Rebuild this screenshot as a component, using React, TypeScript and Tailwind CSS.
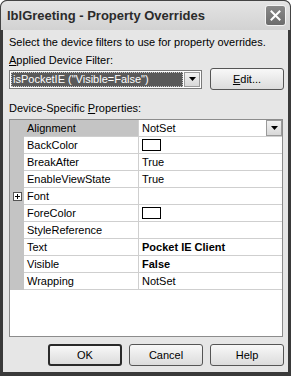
const rows: { name: string; value?: string; bold?: boolean; swatch?: boolean; expand?: boolean; selected?: boolean }[] = [
  { name: "Alignment", value: "NotSet", selected: true },
  { name: "BackColor", swatch: true },
  { name: "BreakAfter", value: "True" },
  { name: "EnableViewState", value: "True" },
  { name: "Font", expand: true },
  { name: "ForeColor", swatch: true },
  { name: "StyleReference" },
  { name: "Text", value: "Pocket IE Client", bold: true },
  { name: "Visible", value: "False", bold: true },
  { name: "Wrapping", value: "NotSet" },
];

function DownArrow() {
  return (
    <svg width="7" height="4" viewBox="0 0 7 4">
      <path d="M0 0h7L3.5 4z" fill="#000" />
    </svg>
  );
}

function XpButton({ children, isDefault }: { children: React.ReactNode; isDefault?: boolean }) {
  return (
    <div
      className={
        "flex h-[22px] w-[74px] shrink-0 items-center justify-center rounded-[3px] bg-gradient-to-b from-[#f8f8f8] to-[#dcdcdc] text-black " +
        (isDefault ? "border-2 border-[#2a2a2a]" : "border border-[#555]")
      }
    >
      {children}
    </div>
  );
}

export default function App() {
  return (
    <div className="flex h-[376px] w-[291px] flex-col overflow-hidden rounded-t-[7px] bg-[#3a3a3a] font-['Liberation_Sans',sans-serif] text-[11px] text-black">
      <div className="flex h-[30px] shrink-0 items-center justify-between rounded-t-[7px] border border-b-0 border-[#444] bg-gradient-to-b from-[#e4e4e4] to-[#d2d2d2] pl-[6px] pr-[4px]">
        <span className="text-[13px] font-bold text-[#2b2b2b]">lblGreeting - Property Overrides</span>
        <div className="flex h-[21px] w-[21px] items-center justify-center rounded-[3px] border border-[#f4f4f4] bg-gradient-to-b from-[#8a8a8a] to-[#6c6c6c]">
          <svg width="11" height="11" viewBox="0 0 11 11">
            <path d="M1.5 1.5l8 8M9.5 1.5l-8 8" stroke="#fff" strokeWidth="2" strokeLinecap="square" />
          </svg>
        </div>
      </div>
      <div className="mx-[3px] mb-[4px] flex flex-1 flex-col bg-[#e6e6e6] pl-[6px] pr-[4px] pt-[6px]">
        <div className="h-[13px] leading-[13px]">Select the device filters to use for property overrides.</div>
        <div className="mt-[5px] h-[13px] leading-[13px]">
          <span className="underline">A</span>pplied Device Filter:
        </div>
        <div className="mt-[2px] flex h-[20px] items-center gap-[8px]">
          <div className="flex h-[19px] w-[193px] shrink-0 items-center border border-[#7a7a7a] bg-white p-[1px]">
            <div className="flex h-full flex-1 items-center border border-dotted border-[#ccc] bg-[#5a5a5a] pl-[1px] leading-none text-white">
              isPocketIE ("Visible=False")
            </div>
            <div className="ml-[1px] flex h-full w-[16px] items-center justify-center border border-[#9a9a9a] bg-gradient-to-b from-[#f2f2f2] to-[#d8d8d8]">
              <DownArrow />
            </div>
          </div>
          <XpButton>
            <span>
              <span className="underline">E</span>dit...
            </span>
          </XpButton>
        </div>
        <div className="mt-[13px] h-[13px] leading-[13px]">
          Device-Specific <span className="underline">P</span>roperties:
        </div>
        <div className="mr-[1px] mt-[4px] h-[218px] border border-[#8c8c8c] bg-white">
          {rows.map((r) => (
            <div key={r.name} className="flex h-[17px]">
              <div className="flex w-[14px] shrink-0 items-center justify-center bg-[#c4c4c4]">
                {r.expand && (
                  <div className="flex h-[9px] w-[9px] items-center justify-center border border-[#555] bg-white">
                    <svg width="5" height="5" viewBox="0 0 5 5">
                      <path d="M0 2.5h5M2.5 0v5" stroke="#000" strokeWidth="1" />
                    </svg>
                  </div>
                )}
              </div>
              <div
                className={
                  "flex w-[115px] shrink-0 items-center border-b border-r border-[#cfcfcf] pl-[3px] " +
                  (r.selected ? "bg-[#c4c4c4]" : "")
                }
              >
                {r.name}
              </div>
              <div className="flex flex-1 items-center border-b border-[#cfcfcf] pl-[3px]">
                {r.swatch && <div className="h-[12px] w-[19px] border border-black bg-white" />}
                {r.value && <span className={r.bold ? "font-bold" : ""}>{r.value}</span>}
                {r.selected && (
                  <div className="ml-auto flex h-[16px] w-[16px] items-center justify-center border border-[#9a9a9a] bg-gradient-to-b from-[#f2f2f2] to-[#d8d8d8]">
                    <DownArrow />
                  </div>
                )}
              </div>
            </div>
          ))}
        </div>
        <div className="mt-[7px] flex justify-end gap-[7px]">
          <XpButton isDefault>OK</XpButton>
          <XpButton>Cancel</XpButton>
          <XpButton>Help</XpButton>
        </div>
      </div>
    </div>
  );
}
